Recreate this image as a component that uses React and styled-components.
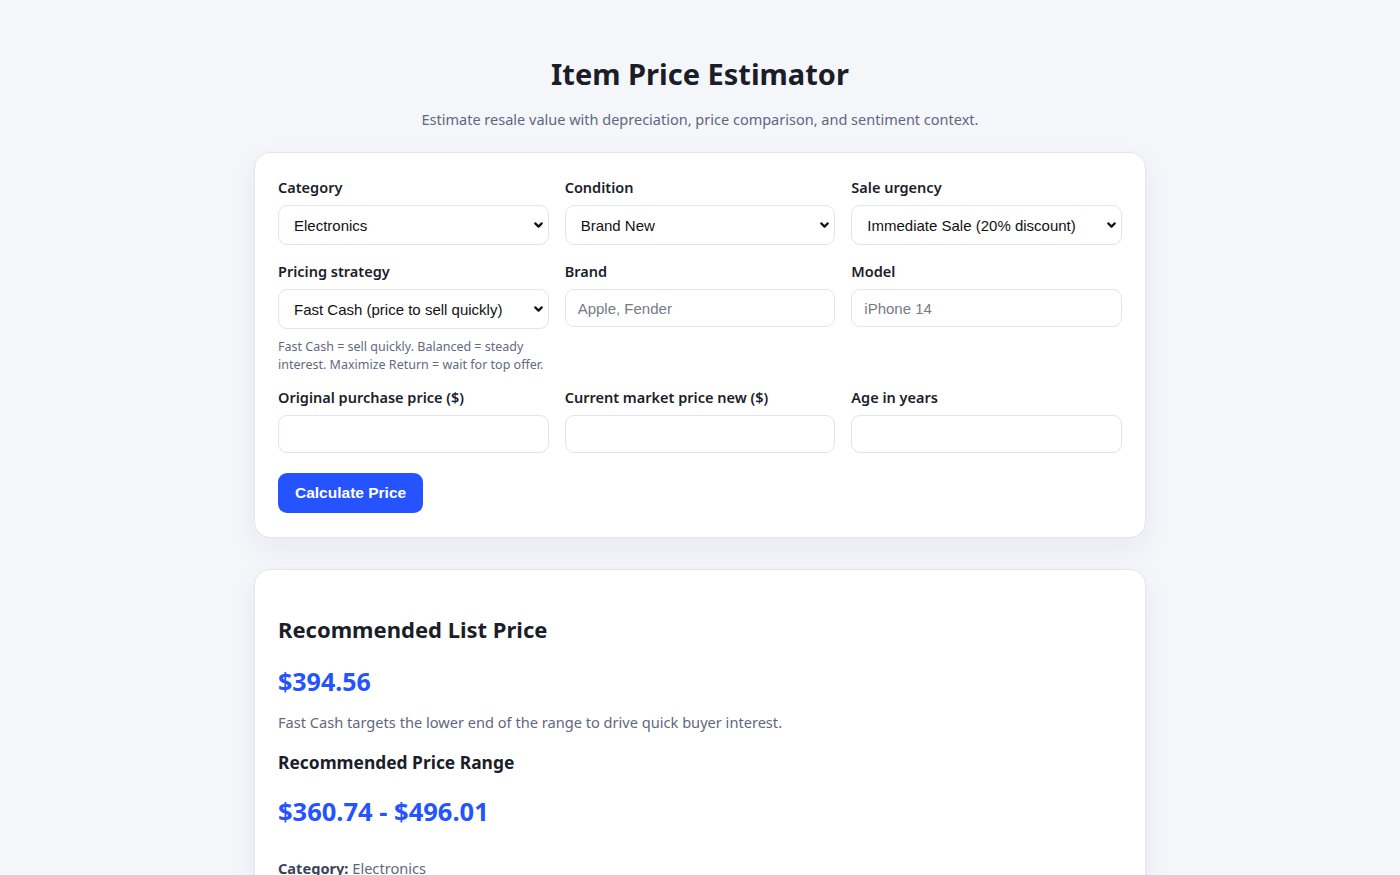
import React, { useState } from 'react';
import styled, { createGlobalStyle } from 'styled-components';
import { ChevronDown } from 'lucide-react';

const GlobalStyle = createGlobalStyle`
  * { box-sizing: border-box; }
  body {
    margin: 0;
    background: #f5f6fa;
    font-family: "Noto Sans", "Open Sans", sans-serif;
    color: #1b1d29;
  }
`;

const Page = styled.div`
  max-width: 892px;
  margin: 0 auto;
  padding: 52px 0 40px;
`;

const Title = styled.h1`
  margin: 0;
  text-align: center;
  font-size: 29px;
  font-weight: 700;
  line-height: 44px;
`;

const Subtitle = styled.p`
  margin: 13px 0 23px;
  text-align: center;
  font-size: 14.5px;
  color: #5f6780;
`;

const Card = styled.section`
  background: #fff;
  border: 1px solid #e4e6ef;
  border-radius: 16px;
  box-shadow: 0 10px 30px rgba(30, 40, 80, 0.06);
  padding: ${(p) => p.$pad || '23px 23px 24px'};
  margin-bottom: 31px;
`;

const Grid = styled.div`
  display: grid;
  grid-template-columns: repeat(3, 1fr);
  column-gap: 16px;
  row-gap: 15px;
`;

const Field = styled.div`
  display: flex;
  flex-direction: column;
`;

const Label = styled.label`
  font-size: 14.5px;
  font-weight: 600;
  line-height: 22px;
  margin-bottom: 7px;
`;

const SelectWrap = styled.div`
  position: relative;
  svg {
    position: absolute;
    right: 4px;
    top: 50%;
    transform: translateY(-50%);
    pointer-events: none;
    color: #111;
  }
`;

const Select = styled.select`
  appearance: none;
  width: 100%;
  height: 40px;
  padding: 0 28px 0 15px;
  border: 1px solid #e2e4ee;
  border-radius: 9px;
  background: #fff;
  font-family: "Liberation Sans", Arial, sans-serif;
  font-size: 15px;
  color: #111;
`;

const Input = styled.input`
  width: 100%;
  height: 38px;
  padding: 0 12px;
  border: 1px solid #e2e4ee;
  border-radius: 9px;
  font-family: "Liberation Sans", Arial, sans-serif;
  font-size: 15px;
  color: #111;
  &::placeholder { color: #767b86; }
`;

const Help = styled.p`
  margin: 9px 0 -3px;
  font-size: 12.5px;
  line-height: 18px;
  color: #636a7e;
`;

const Button = styled.button`
  margin-top: 20px;
  height: 40px;
  padding: 0 17px;
  border: none;
  border-radius: 9px;
  background: #2453ff;
  color: #fff;
  font-family: "Liberation Sans", Arial, sans-serif;
  font-size: 15.5px;
  font-weight: 700;
  cursor: pointer;
`;

const ResultTitle = styled.h2`
  margin: 0;
  font-size: 22px;
  font-weight: 700;
  line-height: 32px;
`;

const Price = styled.div`
  color: #2453ff;
  font-weight: 700;
  font-size: ${(p) => p.$size || 25}px;
  line-height: 36px;
  margin: ${(p) => p.$margin || '18px 0 0'};
`;

const Note = styled.p`
  margin: 13px 0 0;
  font-size: 14.6px;
  color: #5f6780;
`;

const SubTitle = styled.h3`
  margin: 18px 0 0;
  font-size: 17.4px;
  font-weight: 700;
`;

const Meta = styled.p`
  margin: 29px 0 0;
  font-size: 14.6px;
  color: #5f6780;
  b { font-weight: 700; color: #3c4358; }
`;

function SelectField({ label, options, children }) {
  return (
    <Field>
      <Label>{label}</Label>
      <SelectWrap>
        <Select defaultValue={options[0]}>
          {options.map((o) => (
            <option key={o}>{o}</option>
          ))}
        </Select>
        <ChevronDown size={13} strokeWidth={4} />
      </SelectWrap>
      {children}
    </Field>
  );
}

function InputField({ label, placeholder, type = 'text' }) {
  return (
    <Field>
      <Label>{label}</Label>
      <Input type={type} placeholder={placeholder} />
    </Field>
  );
}

export default function App() {
  const [shown] = useState(true);

  return (
    <>
      <GlobalStyle />
      <Page>
        <Title>Item Price Estimator</Title>
        <Subtitle>Estimate resale value with depreciation, price comparison, and sentiment context.</Subtitle>

        <Card>
          <Grid>
            <SelectField label="Category" options={['Electronics', 'Furniture', 'Musical Instruments', 'Clothing']} />
            <SelectField label="Condition" options={['Brand New', 'Like New', 'Good', 'Fair', 'Poor']} />
            <SelectField
              label="Sale urgency"
              options={['Immediate Sale (20% discount)', 'Within a Month', 'No Rush']}
            />
            <SelectField
              label="Pricing strategy"
              options={['Fast Cash (price to sell quickly)', 'Balanced', 'Maximize Return']}
            >
              <Help>Fast Cash = sell quickly. Balanced = steady interest. Maximize Return = wait for top offer.</Help>
            </SelectField>
            <InputField label="Brand" placeholder="Apple, Fender" />
            <InputField label="Model" placeholder="iPhone 14" />
            <InputField label="Original purchase price ($)" type="number" />
            <InputField label="Current market price new ($)" type="number" />
            <InputField label="Age in years" type="number" />
          </Grid>
          <Button>Calculate Price</Button>
        </Card>

        {shown && (
          <Card $pad="43px 23px 24px">
            <ResultTitle>Recommended List Price</ResultTitle>
            <Price>$394.56</Price>
            <Note>Fast Cash targets the lower end of the range to drive quick buyer interest.</Note>
            <SubTitle>Recommended Price Range</SubTitle>
            <Price $size={25.5} $margin="19px 0 0">$360.74 - $496.01</Price>
            <Meta>
              <b>Category:</b> Electronics
            </Meta>
          </Card>
        )}
      </Page>
    </>
  );
}
